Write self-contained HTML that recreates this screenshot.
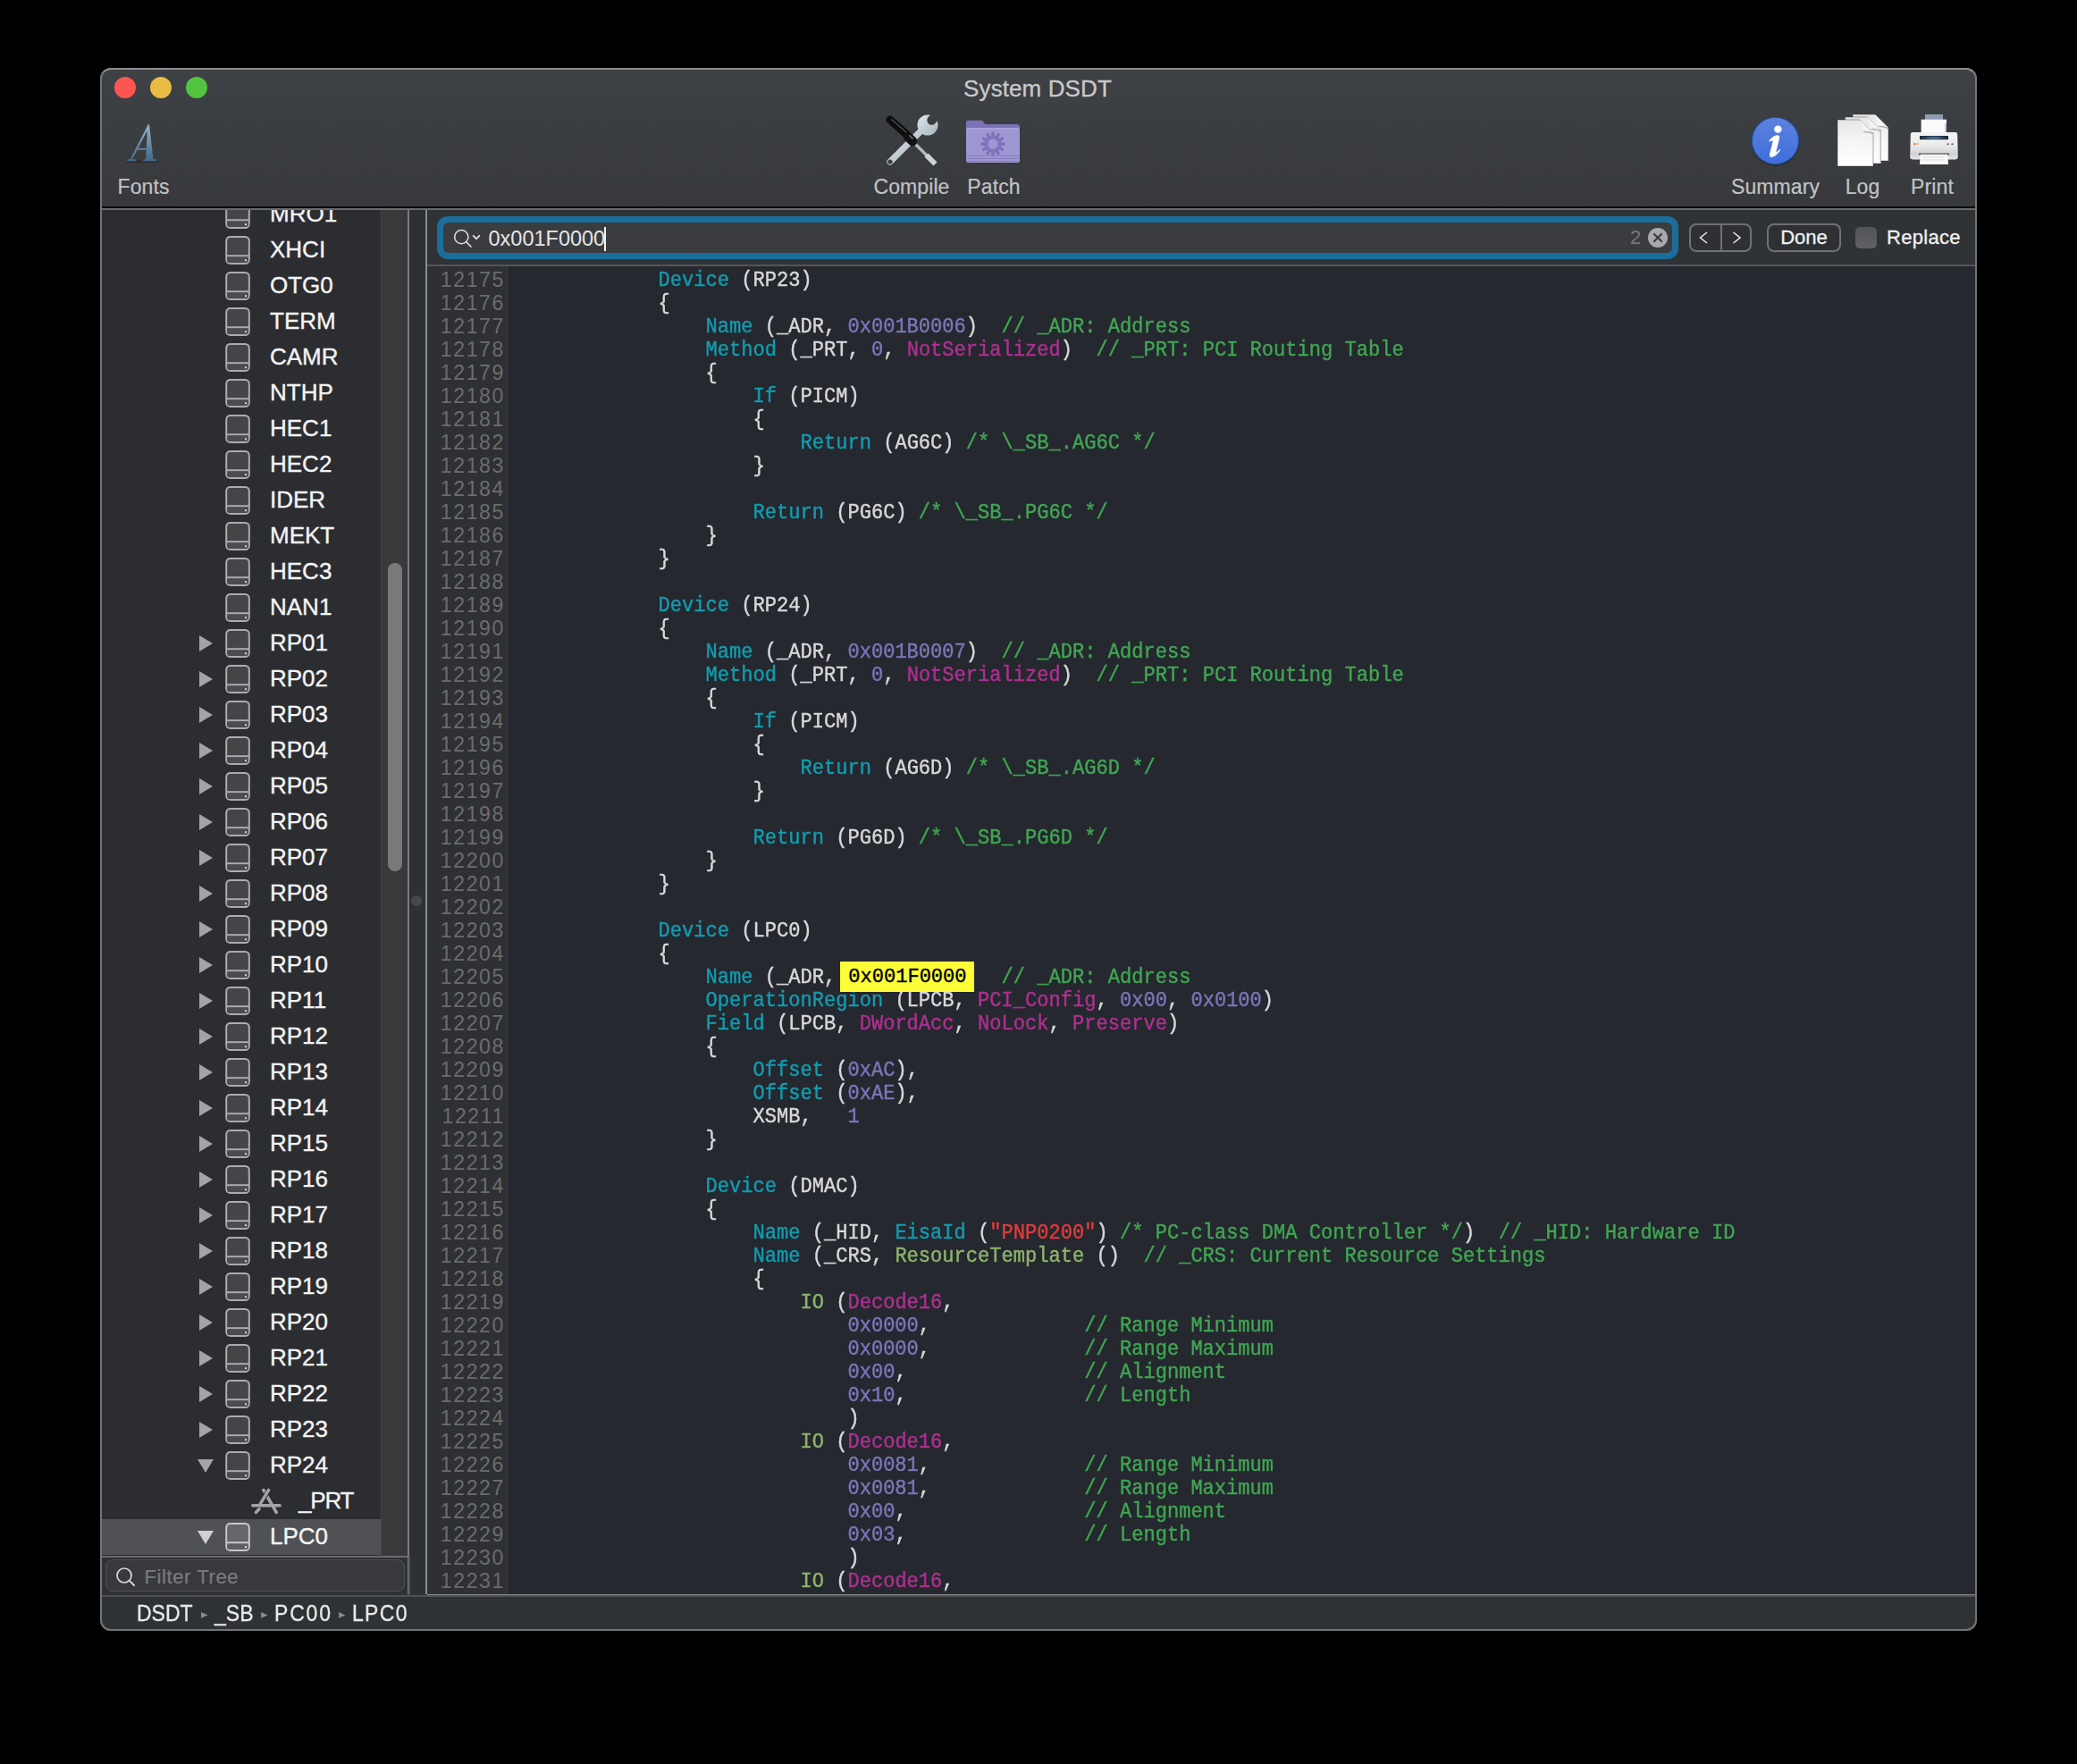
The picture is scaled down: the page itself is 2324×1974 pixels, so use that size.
<!DOCTYPE html>
<html><head><meta charset="utf-8">
<style>
*{box-sizing:border-box;margin:0;padding:0}
html,body{width:2324px;height:1974px;background:#000;overflow:hidden}
body{font-family:"Liberation Sans",sans-serif;position:relative}
.a{position:absolute}
#win{left:112px;top:76px;width:2100px;height:1749px;border-radius:12px;overflow:hidden;background:#2f3235}
#tb{left:0;top:0;width:2100px;height:155px;background:linear-gradient(#3e4145,#37393c)}
#frame{left:112px;top:76px;width:2100px;height:1749px;border-radius:12px;border:2px solid #737475;border-top-color:#8e8e8e;pointer-events:none}
.light{width:24px;height:24px;border-radius:50%;top:10px}
.title{left:-1px;width:2100px;top:8px;text-align:center;font-size:26px;color:#c9c9cb;line-height:30px;letter-spacing:0.1px;-webkit-text-stroke:0.3px #c9c9cb}
.lbl{font-size:23px;color:#c2c3c5;line-height:26px;top:120px;text-align:center;letter-spacing:0.1px;-webkit-text-stroke:0.2px #c2c3c5}
#side{left:2px;top:157px;width:312px;height:1508px;background:#2c2d31;overflow:hidden}
.row{position:absolute;left:0;width:312px;height:40px}
.row.sel{background:#505155}
.tri{position:absolute;left:109px;top:11px;width:0;height:0}
.tri.right{border-left:15px solid #a3a4a8;border-top:9px solid transparent;border-bottom:9px solid transparent}
.tri.down{left:106.8px;top:13px;border-top:15px solid #a3a4a8;border-left:9px solid transparent;border-right:9px solid transparent}
.tri.down.sel{border-top-color:#d0d0d4}
.ico{position:absolute;left:137px;top:3px;width:30px;height:34px}
.ico2{position:absolute;left:167px;top:4px;width:36px;height:34px}
.nm{position:absolute;left:188px;top:-1px;font-size:26px;line-height:40px;color:#f4f4f4;-webkit-text-stroke:0.35px #f4f4f4}
#track{left:314px;top:157px;width:31px;height:1508px;background:#39393b;border-left:1px solid #45464a}
#thumb{left:322px;top:554px;width:16px;height:345px;border-radius:8px;background:#79797b}
#divcol{left:344px;top:157px;width:22px;height:1551px;background:#2e3133;border-left:2px solid #7a7b7d;border-right:2px solid #8a8b8d}
#filter{left:5.5px;top:1669px;width:335.5px;height:36px;border-radius:8px;background:#38393c;border:1.5px solid #505154}
#sbar{left:0;top:1708.5px;width:2100px;height:40.5px;background:#2f3235;border-top:2px solid #4f5153}
.crumb{top:1711px;font-size:23px;line-height:38px;color:#e8e8e8;-webkit-text-stroke:0.3px #e8e8e8;transform:scaleY(1.12);transform-origin:0 28px}
#editor{left:366px;top:157px;width:1734px;height:1553px;background:#25282f;border-right:2px solid #8a8b8d;border-bottom:2px solid #8a8b8d}
#search{left:0;top:0;width:1734px;height:65px;background:#303336;border-bottom:2px solid #535558}
#ring{left:11px;top:9px;width:1389px;height:48px;border-radius:12px;background:#1b6e9b}
#field{left:18px;top:16px;width:1375px;height:34px;border-radius:6px;background:#3a3c3f}
#gut{left:0;top:65px;width:90px;height:1486px;background:#2e3033;border-right:1.5px solid #3f4042}
.code{font-family:"Liberation Mono",monospace;font-size:22.07px;line-height:26px;white-space:pre;color:#d8d8d8}
#lines,#hlbox{-webkit-text-stroke:0.4px currentColor}
#nums{left:0;top:66.5px;width:87px;text-align:right;color:#6b6c6e;font-family:"Liberation Sans",sans-serif;font-size:23px;letter-spacing:1.65px}
#lines{left:99.7px;top:69px}
#lines .l{transform:scaleY(1.08);transform-origin:0 18.9px}
.k{color:#129cb0}.n{color:#7b76b9}.m{color:#ae3090}.c{color:#40a652}.o{color:#8db46b}.s{color:#e33b3b}
#hlbox{left:462px;top:843px;width:150px;height:34px;background:#fdfd38;color:#000}
.btn{border:2px solid #707174;border-radius:8px;background:#2e3033}
</style></head><body>
<div id="win" class="a">
  <div id="tb" class="a">
    <div class="a light" style="left:16px;background:#fd5652"></div>
    <div class="a light" style="left:56px;background:#e9bc43"></div>
    <div class="a light" style="left:96px;background:#52c43f"></div>
    <div class="a title">System DSDT</div>
    <!-- Fonts icon -->
    <svg class="a" style="left:26px;top:60px" width="42" height="48" viewBox="0 0 42 48">
      <defs><linearGradient id="ag" x1="0" y1="0" x2="0" y2="1"><stop offset="0" stop-color="#93b4cc"/><stop offset="1" stop-color="#426887"/></linearGradient></defs>
      <ellipse cx="21" cy="44.8" rx="19" ry="1.6" fill="#2a2c2f" opacity="0.7"/>
      <path d="M27.0 3.5 L29.0 3.5 L33.5 42.2 L25.2 42.2 Z M26.6 5.5 L27.6 8.5 L10.2 42.2 L7.6 42.2 Z M14.8 29.8 L26.2 29.8 L26.2 31.8 L13.8 31.8 Z M3.8 44.2 L4.8 42.2 L13.5 42.2 L14.5 44.2 Z M21.8 44.2 L22.8 42.2 L36.2 42.2 L37.2 44.2 Z" fill="url(#ag)"/>
    </svg>
    <div class="a lbl" style="left:6px;width:85px">Fonts</div>
    <!-- Compile icon -->
    <svg class="a" style="left:873px;top:46px" width="70" height="70" viewBox="0 0 70 70">
      <defs>
        <linearGradient id="wg" x1="0" y1="0" x2="1" y2="1"><stop offset="0" stop-color="#dde8ee"/><stop offset="1" stop-color="#a9b3b9"/></linearGradient>
        <mask id="wm"><rect width="70" height="70" fill="#fff"/><circle cx="57.5" cy="12.5" r="5.2" fill="#000"/><path d="M54 9 L62 1 L69 8 L61 16 Z" fill="#000"/><circle cx="11" cy="59" r="2.6" fill="#000"/></mask>
      </defs>
      <g mask="url(#wm)">
        <line x1="11" y1="59" x2="46" y2="24" stroke="url(#wg)" stroke-width="7.2" stroke-linecap="round"/>
        <circle cx="53" cy="18" r="11.5" fill="url(#wg)"/>
      </g>
      <line x1="38" y1="38" x2="52" y2="52" stroke="#aeb9c0" stroke-width="3.4"/>
      <path d="M50.5 53.5 L53.5 50.5 L62.5 59.5 L59.5 62.5 Z" fill="#c9d3d9" stroke="#c9d3d9" stroke-width="1.6" stroke-linejoin="round"/>
      <line x1="11" y1="12" x2="30" y2="29" stroke="#0d0d0d" stroke-width="9" stroke-linecap="round"/>
      <line x1="13" y1="12" x2="29" y2="26" stroke="#5a5a5a" stroke-width="1.6" stroke-linecap="round" opacity="0.8"/>
      <line x1="31" y1="31" x2="36" y2="36" stroke="#111" stroke-width="10.5" stroke-linecap="round"/>
      <line x1="33" y1="30" x2="36" y2="33" stroke="#5c5c5c" stroke-width="2" stroke-linecap="round"/>
    </svg>
    <div class="a lbl" style="left:858px;width:100px">Compile</div>
    <!-- Patch icon -->
    <svg class="a" style="left:968px;top:58px" width="64" height="52" viewBox="0 0 64 52">
      <path d="M1 3.5 Q1 0.8 3.8 0.8 L17.5 0.8 Q19.3 0.8 20.3 2.2 L22.2 5 L58 5 Q61 5 61 8 L61 45 Q61 48 58 48 L4 48 Q1 48 1 45 Z" fill="#7b72b6"/>
      <path d="M1 12 Q1 9.2 3.8 9.2 L58.2 9.2 Q61 9.2 61 12 L61 45.5 Q61 48 58.5 48 L3.5 48 Q1 48 1 45.5 Z" fill="#9f97d4"/>
      <rect x="1.5" y="9.2" width="59" height="1" fill="#b2abe6"/>
      <rect x="1" y="39.5" width="60" height="1.4" fill="#8d85c4"/>
      <rect x="1" y="42.8" width="60" height="1.2" fill="#8a82c0"/>
      <rect x="1" y="45.8" width="60" height="1.2" fill="#8a82c0"/>
      <g stroke="#7a71bb" stroke-width="3.2" stroke-linecap="round"><line x1="40.50" y1="27.20" x2="43.30" y2="27.20"/><line x1="39.23" y1="31.95" x2="41.65" y2="33.35"/><line x1="35.75" y1="35.43" x2="37.15" y2="37.85"/><line x1="31.00" y1="36.70" x2="31.00" y2="39.50"/><line x1="26.25" y1="35.43" x2="24.85" y2="37.85"/><line x1="22.77" y1="31.95" x2="20.35" y2="33.35"/><line x1="21.50" y1="27.20" x2="18.70" y2="27.20"/><line x1="22.77" y1="22.45" x2="20.35" y2="21.05"/><line x1="26.25" y1="18.97" x2="24.85" y2="16.55"/><line x1="31.00" y1="17.70" x2="31.00" y2="14.90"/><line x1="35.75" y1="18.97" x2="37.15" y2="16.55"/><line x1="39.23" y1="22.45" x2="41.65" y2="21.05"/></g>
      <circle cx="31" cy="27.2" r="7.8" fill="none" stroke="#7d74bd" stroke-width="4.2"/>
    </svg>
    <div class="a lbl" style="left:950px;width:100px">Patch</div>
    <!-- Summary -->
    <div class="a" style="left:1848px;top:55px;width:53px;height:53px;border-radius:50%;background:linear-gradient(#5b82df,#3f6fdb);border:1px solid #2356c8;box-shadow:0 1px 2px rgba(0,0,0,0.4)"></div>
    <svg class="a" style="left:1838px;top:44px" width="70" height="70" viewBox="0 0 70 70"><circle cx="39.4" cy="24.6" r="4.2" fill="#fff"/><path d="M29.2 37.6 C31.5 35 34.5 31.5 38.5 31.2 C40.8 31 41.6 33 41 35 L37.2 50.6 C38.8 49.5 40.5 48 41.6 46.8 L42.2 47.8 C39.5 52 35.5 56 32.2 55.9 C29.8 55.8 29.6 54 30.2 52 L33.8 37.5 C32.6 37.3 30.8 38.2 29.8 38.6 Z" fill="#fff"/></svg>
    <div class="a lbl" style="left:1812px;width:125px">Summary</div>
    <!-- Log -->
    <svg class="a" style="left:1938px;top:44px" width="70" height="70" viewBox="0 0 70 70">
      <defs><linearGradient id="lg" x1="0" y1="0" x2="0" y2="1"><stop offset="0" stop-color="#e6e6e6"/><stop offset="0.5" stop-color="#f6f6f6"/><stop offset="1" stop-color="#ffffff"/></linearGradient></defs>
      <path d="M23.0 8.0 L48.0 8.0 L63.0 23.0 L63.0 60.0 L23.0 60.0 Z" fill="url(#lg)" stroke="#2a2b2d" stroke-width="0.7" stroke-opacity="0.6"/><path d="M48.0 8.0 Q50.5 17.0 52.2 21.2 Q59.0 20.8 63.0 23.0 Z" fill="#f4f4f4"/><path d="M52.2 21.4 Q59.0 21.2 63.0 24.0" fill="none" stroke="#9a9a9a" stroke-width="1.1" opacity="0.8"/><rect x="61.8" y="24.0" width="1.2" height="36.0" fill="#d0d0d0"/>
      <path d="M14.5 11.0 L39.5 11.0 L54.5 26.0 L54.5 63.0 L14.5 63.0 Z" fill="url(#lg)" stroke="#2a2b2d" stroke-width="0.7" stroke-opacity="0.6"/><path d="M39.5 11.0 Q42.0 20.0 43.7 24.2 Q50.5 23.8 54.5 26.0 Z" fill="#f4f4f4"/><path d="M43.7 24.4 Q50.5 24.2 54.5 27.0" fill="none" stroke="#9a9a9a" stroke-width="1.1" opacity="0.8"/><rect x="53.3" y="27.0" width="1.2" height="36.0" fill="#d0d0d0"/>
      <path d="M6.0 14.0 L31.0 14.0 L46.0 29.0 L46.0 66.0 L6.0 66.0 Z" fill="url(#lg)" stroke="#2a2b2d" stroke-width="0.7" stroke-opacity="0.6"/><path d="M31.0 14.0 Q33.5 23.0 35.2 27.2 Q42.0 26.8 46.0 29.0 Z" fill="#f4f4f4"/><path d="M35.2 27.4 Q42.0 27.2 46.0 30.0" fill="none" stroke="#9a9a9a" stroke-width="1.1" opacity="0.8"/><rect x="44.8" y="30.0" width="1.2" height="36.0" fill="#d0d0d0"/>
    </svg>
    <div class="a lbl" style="left:1937px;width:70px">Log</div>
    <!-- Print -->
    <svg class="a" style="left:2022px;top:48px" width="60" height="64" viewBox="0 0 60 64">
      <defs>
        <linearGradient id="pb" x1="0" y1="0" x2="0" y2="1"><stop offset="0" stop-color="#f4f4f4"/><stop offset="0.45" stop-color="#ececec"/><stop offset="0.8" stop-color="#d2d2d4"/><stop offset="1" stop-color="#e6e6e6"/></linearGradient>
        <radialGradient id="ps" cx="0.5" cy="0.5" r="0.5"><stop offset="0" stop-color="#5f82aa"/><stop offset="1" stop-color="#1c2a3e"/></radialGradient>
      </defs>
      <rect x="20" y="4" width="20" height="6" fill="#8f9bb3"/>
      <rect x="15.6" y="9.7" width="28.4" height="19" fill="#fbfbfb"/>
      <rect x="42.5" y="14" width="1.5" height="14" fill="#a9b8cc"/>
      <path d="M6 24 L54 24 Q56 24 56.2 27 L56.8 51 Q56.8 54.5 53.5 54.5 L6.5 54.5 Q3.2 54.5 3.2 51 L3.8 27 Q4 24 6 24 Z" fill="url(#pb)"/>
      <rect x="14" y="28" width="32" height="4.5" fill="url(#ps)"/>
      <rect x="13" y="32.5" width="34" height="1.2" fill="#f8f8f8"/>
      <rect x="7.5" y="36.3" width="1.8" height="1.6" fill="#e0401c"/><rect x="10.6" y="36.3" width="1.8" height="1.6" fill="#f0a020"/>
      <ellipse cx="45.5" cy="37.2" rx="1.4" ry="1" fill="#6a6a6a"/><ellipse cx="50.5" cy="37.2" rx="1.4" ry="1" fill="#6a6a6a"/>
      <rect x="13" y="47.5" width="34" height="2" fill="#555"/>
      <path d="M14.8 48.8 L45.2 48.8 L46 60 L14 60 Z" fill="#fafafa"/>
      <rect x="17" y="51.5" width="25" height="0.8" fill="#cfcfcf"/><rect x="17" y="54.5" width="25" height="0.8" fill="#cfcfcf"/>
    </svg>
    <div class="a lbl" style="left:2000px;width:100px">Print</div>
  </div>

  <div id="side" class="a">
<div class="row" style="top:-13px"><div class="ico"><svg class="drv" width="30" height="34" viewBox="0 0 30 34"><rect x="2.2" y="2" width="25.6" height="30" rx="4.5" fill="#444547" stroke="#abacb0" stroke-width="2"/><line x1="3" y1="23.2" x2="27" y2="23.2" stroke="#abacb0" stroke-width="2"/><rect x="3.2" y="25" width="23.6" height="5.8" rx="2" fill="#4b4c4f"/><rect x="23" y="27.2" width="2" height="2" fill="#d6d6da"/></svg></div><div class="nm">MRO1</div></div>
<div class="row" style="top:27px"><div class="ico"><svg class="drv" width="30" height="34" viewBox="0 0 30 34"><rect x="2.2" y="2" width="25.6" height="30" rx="4.5" fill="#444547" stroke="#abacb0" stroke-width="2"/><line x1="3" y1="23.2" x2="27" y2="23.2" stroke="#abacb0" stroke-width="2"/><rect x="3.2" y="25" width="23.6" height="5.8" rx="2" fill="#4b4c4f"/><rect x="23" y="27.2" width="2" height="2" fill="#d6d6da"/></svg></div><div class="nm">XHCI</div></div>
<div class="row" style="top:67px"><div class="ico"><svg class="drv" width="30" height="34" viewBox="0 0 30 34"><rect x="2.2" y="2" width="25.6" height="30" rx="4.5" fill="#444547" stroke="#abacb0" stroke-width="2"/><line x1="3" y1="23.2" x2="27" y2="23.2" stroke="#abacb0" stroke-width="2"/><rect x="3.2" y="25" width="23.6" height="5.8" rx="2" fill="#4b4c4f"/><rect x="23" y="27.2" width="2" height="2" fill="#d6d6da"/></svg></div><div class="nm">OTG0</div></div>
<div class="row" style="top:107px"><div class="ico"><svg class="drv" width="30" height="34" viewBox="0 0 30 34"><rect x="2.2" y="2" width="25.6" height="30" rx="4.5" fill="#444547" stroke="#abacb0" stroke-width="2"/><line x1="3" y1="23.2" x2="27" y2="23.2" stroke="#abacb0" stroke-width="2"/><rect x="3.2" y="25" width="23.6" height="5.8" rx="2" fill="#4b4c4f"/><rect x="23" y="27.2" width="2" height="2" fill="#d6d6da"/></svg></div><div class="nm">TERM</div></div>
<div class="row" style="top:147px"><div class="ico"><svg class="drv" width="30" height="34" viewBox="0 0 30 34"><rect x="2.2" y="2" width="25.6" height="30" rx="4.5" fill="#444547" stroke="#abacb0" stroke-width="2"/><line x1="3" y1="23.2" x2="27" y2="23.2" stroke="#abacb0" stroke-width="2"/><rect x="3.2" y="25" width="23.6" height="5.8" rx="2" fill="#4b4c4f"/><rect x="23" y="27.2" width="2" height="2" fill="#d6d6da"/></svg></div><div class="nm">CAMR</div></div>
<div class="row" style="top:187px"><div class="ico"><svg class="drv" width="30" height="34" viewBox="0 0 30 34"><rect x="2.2" y="2" width="25.6" height="30" rx="4.5" fill="#444547" stroke="#abacb0" stroke-width="2"/><line x1="3" y1="23.2" x2="27" y2="23.2" stroke="#abacb0" stroke-width="2"/><rect x="3.2" y="25" width="23.6" height="5.8" rx="2" fill="#4b4c4f"/><rect x="23" y="27.2" width="2" height="2" fill="#d6d6da"/></svg></div><div class="nm">NTHP</div></div>
<div class="row" style="top:227px"><div class="ico"><svg class="drv" width="30" height="34" viewBox="0 0 30 34"><rect x="2.2" y="2" width="25.6" height="30" rx="4.5" fill="#444547" stroke="#abacb0" stroke-width="2"/><line x1="3" y1="23.2" x2="27" y2="23.2" stroke="#abacb0" stroke-width="2"/><rect x="3.2" y="25" width="23.6" height="5.8" rx="2" fill="#4b4c4f"/><rect x="23" y="27.2" width="2" height="2" fill="#d6d6da"/></svg></div><div class="nm">HEC1</div></div>
<div class="row" style="top:267px"><div class="ico"><svg class="drv" width="30" height="34" viewBox="0 0 30 34"><rect x="2.2" y="2" width="25.6" height="30" rx="4.5" fill="#444547" stroke="#abacb0" stroke-width="2"/><line x1="3" y1="23.2" x2="27" y2="23.2" stroke="#abacb0" stroke-width="2"/><rect x="3.2" y="25" width="23.6" height="5.8" rx="2" fill="#4b4c4f"/><rect x="23" y="27.2" width="2" height="2" fill="#d6d6da"/></svg></div><div class="nm">HEC2</div></div>
<div class="row" style="top:307px"><div class="ico"><svg class="drv" width="30" height="34" viewBox="0 0 30 34"><rect x="2.2" y="2" width="25.6" height="30" rx="4.5" fill="#444547" stroke="#abacb0" stroke-width="2"/><line x1="3" y1="23.2" x2="27" y2="23.2" stroke="#abacb0" stroke-width="2"/><rect x="3.2" y="25" width="23.6" height="5.8" rx="2" fill="#4b4c4f"/><rect x="23" y="27.2" width="2" height="2" fill="#d6d6da"/></svg></div><div class="nm">IDER</div></div>
<div class="row" style="top:347px"><div class="ico"><svg class="drv" width="30" height="34" viewBox="0 0 30 34"><rect x="2.2" y="2" width="25.6" height="30" rx="4.5" fill="#444547" stroke="#abacb0" stroke-width="2"/><line x1="3" y1="23.2" x2="27" y2="23.2" stroke="#abacb0" stroke-width="2"/><rect x="3.2" y="25" width="23.6" height="5.8" rx="2" fill="#4b4c4f"/><rect x="23" y="27.2" width="2" height="2" fill="#d6d6da"/></svg></div><div class="nm">MEKT</div></div>
<div class="row" style="top:387px"><div class="ico"><svg class="drv" width="30" height="34" viewBox="0 0 30 34"><rect x="2.2" y="2" width="25.6" height="30" rx="4.5" fill="#444547" stroke="#abacb0" stroke-width="2"/><line x1="3" y1="23.2" x2="27" y2="23.2" stroke="#abacb0" stroke-width="2"/><rect x="3.2" y="25" width="23.6" height="5.8" rx="2" fill="#4b4c4f"/><rect x="23" y="27.2" width="2" height="2" fill="#d6d6da"/></svg></div><div class="nm">HEC3</div></div>
<div class="row" style="top:427px"><div class="ico"><svg class="drv" width="30" height="34" viewBox="0 0 30 34"><rect x="2.2" y="2" width="25.6" height="30" rx="4.5" fill="#444547" stroke="#abacb0" stroke-width="2"/><line x1="3" y1="23.2" x2="27" y2="23.2" stroke="#abacb0" stroke-width="2"/><rect x="3.2" y="25" width="23.6" height="5.8" rx="2" fill="#4b4c4f"/><rect x="23" y="27.2" width="2" height="2" fill="#d6d6da"/></svg></div><div class="nm">NAN1</div></div>
<div class="row" style="top:467px"><div class="tri right"></div><div class="ico"><svg class="drv" width="30" height="34" viewBox="0 0 30 34"><rect x="2.2" y="2" width="25.6" height="30" rx="4.5" fill="#444547" stroke="#abacb0" stroke-width="2"/><line x1="3" y1="23.2" x2="27" y2="23.2" stroke="#abacb0" stroke-width="2"/><rect x="3.2" y="25" width="23.6" height="5.8" rx="2" fill="#4b4c4f"/><rect x="23" y="27.2" width="2" height="2" fill="#d6d6da"/></svg></div><div class="nm">RP01</div></div>
<div class="row" style="top:507px"><div class="tri right"></div><div class="ico"><svg class="drv" width="30" height="34" viewBox="0 0 30 34"><rect x="2.2" y="2" width="25.6" height="30" rx="4.5" fill="#444547" stroke="#abacb0" stroke-width="2"/><line x1="3" y1="23.2" x2="27" y2="23.2" stroke="#abacb0" stroke-width="2"/><rect x="3.2" y="25" width="23.6" height="5.8" rx="2" fill="#4b4c4f"/><rect x="23" y="27.2" width="2" height="2" fill="#d6d6da"/></svg></div><div class="nm">RP02</div></div>
<div class="row" style="top:547px"><div class="tri right"></div><div class="ico"><svg class="drv" width="30" height="34" viewBox="0 0 30 34"><rect x="2.2" y="2" width="25.6" height="30" rx="4.5" fill="#444547" stroke="#abacb0" stroke-width="2"/><line x1="3" y1="23.2" x2="27" y2="23.2" stroke="#abacb0" stroke-width="2"/><rect x="3.2" y="25" width="23.6" height="5.8" rx="2" fill="#4b4c4f"/><rect x="23" y="27.2" width="2" height="2" fill="#d6d6da"/></svg></div><div class="nm">RP03</div></div>
<div class="row" style="top:587px"><div class="tri right"></div><div class="ico"><svg class="drv" width="30" height="34" viewBox="0 0 30 34"><rect x="2.2" y="2" width="25.6" height="30" rx="4.5" fill="#444547" stroke="#abacb0" stroke-width="2"/><line x1="3" y1="23.2" x2="27" y2="23.2" stroke="#abacb0" stroke-width="2"/><rect x="3.2" y="25" width="23.6" height="5.8" rx="2" fill="#4b4c4f"/><rect x="23" y="27.2" width="2" height="2" fill="#d6d6da"/></svg></div><div class="nm">RP04</div></div>
<div class="row" style="top:627px"><div class="tri right"></div><div class="ico"><svg class="drv" width="30" height="34" viewBox="0 0 30 34"><rect x="2.2" y="2" width="25.6" height="30" rx="4.5" fill="#444547" stroke="#abacb0" stroke-width="2"/><line x1="3" y1="23.2" x2="27" y2="23.2" stroke="#abacb0" stroke-width="2"/><rect x="3.2" y="25" width="23.6" height="5.8" rx="2" fill="#4b4c4f"/><rect x="23" y="27.2" width="2" height="2" fill="#d6d6da"/></svg></div><div class="nm">RP05</div></div>
<div class="row" style="top:667px"><div class="tri right"></div><div class="ico"><svg class="drv" width="30" height="34" viewBox="0 0 30 34"><rect x="2.2" y="2" width="25.6" height="30" rx="4.5" fill="#444547" stroke="#abacb0" stroke-width="2"/><line x1="3" y1="23.2" x2="27" y2="23.2" stroke="#abacb0" stroke-width="2"/><rect x="3.2" y="25" width="23.6" height="5.8" rx="2" fill="#4b4c4f"/><rect x="23" y="27.2" width="2" height="2" fill="#d6d6da"/></svg></div><div class="nm">RP06</div></div>
<div class="row" style="top:707px"><div class="tri right"></div><div class="ico"><svg class="drv" width="30" height="34" viewBox="0 0 30 34"><rect x="2.2" y="2" width="25.6" height="30" rx="4.5" fill="#444547" stroke="#abacb0" stroke-width="2"/><line x1="3" y1="23.2" x2="27" y2="23.2" stroke="#abacb0" stroke-width="2"/><rect x="3.2" y="25" width="23.6" height="5.8" rx="2" fill="#4b4c4f"/><rect x="23" y="27.2" width="2" height="2" fill="#d6d6da"/></svg></div><div class="nm">RP07</div></div>
<div class="row" style="top:747px"><div class="tri right"></div><div class="ico"><svg class="drv" width="30" height="34" viewBox="0 0 30 34"><rect x="2.2" y="2" width="25.6" height="30" rx="4.5" fill="#444547" stroke="#abacb0" stroke-width="2"/><line x1="3" y1="23.2" x2="27" y2="23.2" stroke="#abacb0" stroke-width="2"/><rect x="3.2" y="25" width="23.6" height="5.8" rx="2" fill="#4b4c4f"/><rect x="23" y="27.2" width="2" height="2" fill="#d6d6da"/></svg></div><div class="nm">RP08</div></div>
<div class="row" style="top:787px"><div class="tri right"></div><div class="ico"><svg class="drv" width="30" height="34" viewBox="0 0 30 34"><rect x="2.2" y="2" width="25.6" height="30" rx="4.5" fill="#444547" stroke="#abacb0" stroke-width="2"/><line x1="3" y1="23.2" x2="27" y2="23.2" stroke="#abacb0" stroke-width="2"/><rect x="3.2" y="25" width="23.6" height="5.8" rx="2" fill="#4b4c4f"/><rect x="23" y="27.2" width="2" height="2" fill="#d6d6da"/></svg></div><div class="nm">RP09</div></div>
<div class="row" style="top:827px"><div class="tri right"></div><div class="ico"><svg class="drv" width="30" height="34" viewBox="0 0 30 34"><rect x="2.2" y="2" width="25.6" height="30" rx="4.5" fill="#444547" stroke="#abacb0" stroke-width="2"/><line x1="3" y1="23.2" x2="27" y2="23.2" stroke="#abacb0" stroke-width="2"/><rect x="3.2" y="25" width="23.6" height="5.8" rx="2" fill="#4b4c4f"/><rect x="23" y="27.2" width="2" height="2" fill="#d6d6da"/></svg></div><div class="nm">RP10</div></div>
<div class="row" style="top:867px"><div class="tri right"></div><div class="ico"><svg class="drv" width="30" height="34" viewBox="0 0 30 34"><rect x="2.2" y="2" width="25.6" height="30" rx="4.5" fill="#444547" stroke="#abacb0" stroke-width="2"/><line x1="3" y1="23.2" x2="27" y2="23.2" stroke="#abacb0" stroke-width="2"/><rect x="3.2" y="25" width="23.6" height="5.8" rx="2" fill="#4b4c4f"/><rect x="23" y="27.2" width="2" height="2" fill="#d6d6da"/></svg></div><div class="nm">RP11</div></div>
<div class="row" style="top:907px"><div class="tri right"></div><div class="ico"><svg class="drv" width="30" height="34" viewBox="0 0 30 34"><rect x="2.2" y="2" width="25.6" height="30" rx="4.5" fill="#444547" stroke="#abacb0" stroke-width="2"/><line x1="3" y1="23.2" x2="27" y2="23.2" stroke="#abacb0" stroke-width="2"/><rect x="3.2" y="25" width="23.6" height="5.8" rx="2" fill="#4b4c4f"/><rect x="23" y="27.2" width="2" height="2" fill="#d6d6da"/></svg></div><div class="nm">RP12</div></div>
<div class="row" style="top:947px"><div class="tri right"></div><div class="ico"><svg class="drv" width="30" height="34" viewBox="0 0 30 34"><rect x="2.2" y="2" width="25.6" height="30" rx="4.5" fill="#444547" stroke="#abacb0" stroke-width="2"/><line x1="3" y1="23.2" x2="27" y2="23.2" stroke="#abacb0" stroke-width="2"/><rect x="3.2" y="25" width="23.6" height="5.8" rx="2" fill="#4b4c4f"/><rect x="23" y="27.2" width="2" height="2" fill="#d6d6da"/></svg></div><div class="nm">RP13</div></div>
<div class="row" style="top:987px"><div class="tri right"></div><div class="ico"><svg class="drv" width="30" height="34" viewBox="0 0 30 34"><rect x="2.2" y="2" width="25.6" height="30" rx="4.5" fill="#444547" stroke="#abacb0" stroke-width="2"/><line x1="3" y1="23.2" x2="27" y2="23.2" stroke="#abacb0" stroke-width="2"/><rect x="3.2" y="25" width="23.6" height="5.8" rx="2" fill="#4b4c4f"/><rect x="23" y="27.2" width="2" height="2" fill="#d6d6da"/></svg></div><div class="nm">RP14</div></div>
<div class="row" style="top:1027px"><div class="tri right"></div><div class="ico"><svg class="drv" width="30" height="34" viewBox="0 0 30 34"><rect x="2.2" y="2" width="25.6" height="30" rx="4.5" fill="#444547" stroke="#abacb0" stroke-width="2"/><line x1="3" y1="23.2" x2="27" y2="23.2" stroke="#abacb0" stroke-width="2"/><rect x="3.2" y="25" width="23.6" height="5.8" rx="2" fill="#4b4c4f"/><rect x="23" y="27.2" width="2" height="2" fill="#d6d6da"/></svg></div><div class="nm">RP15</div></div>
<div class="row" style="top:1067px"><div class="tri right"></div><div class="ico"><svg class="drv" width="30" height="34" viewBox="0 0 30 34"><rect x="2.2" y="2" width="25.6" height="30" rx="4.5" fill="#444547" stroke="#abacb0" stroke-width="2"/><line x1="3" y1="23.2" x2="27" y2="23.2" stroke="#abacb0" stroke-width="2"/><rect x="3.2" y="25" width="23.6" height="5.8" rx="2" fill="#4b4c4f"/><rect x="23" y="27.2" width="2" height="2" fill="#d6d6da"/></svg></div><div class="nm">RP16</div></div>
<div class="row" style="top:1107px"><div class="tri right"></div><div class="ico"><svg class="drv" width="30" height="34" viewBox="0 0 30 34"><rect x="2.2" y="2" width="25.6" height="30" rx="4.5" fill="#444547" stroke="#abacb0" stroke-width="2"/><line x1="3" y1="23.2" x2="27" y2="23.2" stroke="#abacb0" stroke-width="2"/><rect x="3.2" y="25" width="23.6" height="5.8" rx="2" fill="#4b4c4f"/><rect x="23" y="27.2" width="2" height="2" fill="#d6d6da"/></svg></div><div class="nm">RP17</div></div>
<div class="row" style="top:1147px"><div class="tri right"></div><div class="ico"><svg class="drv" width="30" height="34" viewBox="0 0 30 34"><rect x="2.2" y="2" width="25.6" height="30" rx="4.5" fill="#444547" stroke="#abacb0" stroke-width="2"/><line x1="3" y1="23.2" x2="27" y2="23.2" stroke="#abacb0" stroke-width="2"/><rect x="3.2" y="25" width="23.6" height="5.8" rx="2" fill="#4b4c4f"/><rect x="23" y="27.2" width="2" height="2" fill="#d6d6da"/></svg></div><div class="nm">RP18</div></div>
<div class="row" style="top:1187px"><div class="tri right"></div><div class="ico"><svg class="drv" width="30" height="34" viewBox="0 0 30 34"><rect x="2.2" y="2" width="25.6" height="30" rx="4.5" fill="#444547" stroke="#abacb0" stroke-width="2"/><line x1="3" y1="23.2" x2="27" y2="23.2" stroke="#abacb0" stroke-width="2"/><rect x="3.2" y="25" width="23.6" height="5.8" rx="2" fill="#4b4c4f"/><rect x="23" y="27.2" width="2" height="2" fill="#d6d6da"/></svg></div><div class="nm">RP19</div></div>
<div class="row" style="top:1227px"><div class="tri right"></div><div class="ico"><svg class="drv" width="30" height="34" viewBox="0 0 30 34"><rect x="2.2" y="2" width="25.6" height="30" rx="4.5" fill="#444547" stroke="#abacb0" stroke-width="2"/><line x1="3" y1="23.2" x2="27" y2="23.2" stroke="#abacb0" stroke-width="2"/><rect x="3.2" y="25" width="23.6" height="5.8" rx="2" fill="#4b4c4f"/><rect x="23" y="27.2" width="2" height="2" fill="#d6d6da"/></svg></div><div class="nm">RP20</div></div>
<div class="row" style="top:1267px"><div class="tri right"></div><div class="ico"><svg class="drv" width="30" height="34" viewBox="0 0 30 34"><rect x="2.2" y="2" width="25.6" height="30" rx="4.5" fill="#444547" stroke="#abacb0" stroke-width="2"/><line x1="3" y1="23.2" x2="27" y2="23.2" stroke="#abacb0" stroke-width="2"/><rect x="3.2" y="25" width="23.6" height="5.8" rx="2" fill="#4b4c4f"/><rect x="23" y="27.2" width="2" height="2" fill="#d6d6da"/></svg></div><div class="nm">RP21</div></div>
<div class="row" style="top:1307px"><div class="tri right"></div><div class="ico"><svg class="drv" width="30" height="34" viewBox="0 0 30 34"><rect x="2.2" y="2" width="25.6" height="30" rx="4.5" fill="#444547" stroke="#abacb0" stroke-width="2"/><line x1="3" y1="23.2" x2="27" y2="23.2" stroke="#abacb0" stroke-width="2"/><rect x="3.2" y="25" width="23.6" height="5.8" rx="2" fill="#4b4c4f"/><rect x="23" y="27.2" width="2" height="2" fill="#d6d6da"/></svg></div><div class="nm">RP22</div></div>
<div class="row" style="top:1347px"><div class="tri right"></div><div class="ico"><svg class="drv" width="30" height="34" viewBox="0 0 30 34"><rect x="2.2" y="2" width="25.6" height="30" rx="4.5" fill="#444547" stroke="#abacb0" stroke-width="2"/><line x1="3" y1="23.2" x2="27" y2="23.2" stroke="#abacb0" stroke-width="2"/><rect x="3.2" y="25" width="23.6" height="5.8" rx="2" fill="#4b4c4f"/><rect x="23" y="27.2" width="2" height="2" fill="#d6d6da"/></svg></div><div class="nm">RP23</div></div>
<div class="row" style="top:1387px"><div class="tri down"></div><div class="ico"><svg class="drv" width="30" height="34" viewBox="0 0 30 34"><rect x="2.2" y="2" width="25.6" height="30" rx="4.5" fill="#444547" stroke="#abacb0" stroke-width="2"/><line x1="3" y1="23.2" x2="27" y2="23.2" stroke="#abacb0" stroke-width="2"/><rect x="3.2" y="25" width="23.6" height="5.8" rx="2" fill="#4b4c4f"/><rect x="23" y="27.2" width="2" height="2" fill="#d6d6da"/></svg></div><div class="nm">RP24</div></div>
<div class="row" style="top:1427px"><div class="ico2"><svg width="36" height="34" viewBox="0 0 36 34"><g stroke-linecap="round" fill="none"><line x1="13.8" y1="3.4" x2="28.3" y2="28.5" stroke="#a3a4a8" stroke-width="3.5"/><line x1="17.2" y1="7.4" x2="10.5" y2="18.6" stroke="#2c2d31" stroke-width="5.2"/><line x1="19.6" y1="3.4" x2="9.5" y2="20.2" stroke="#a3a4a8" stroke-width="3.5"/><line x1="1.8" y1="20.8" x2="32.1" y2="20.8" stroke="#a3a4a8" stroke-width="3.5"/><line x1="9" y1="24.6" x2="5.4" y2="28.5" stroke="#a3a4a8" stroke-width="3.5"/></g></svg></div><div class="nm" style="left:220px;letter-spacing:-1.2px">_PRT</div></div>
<div class="row sel" style="top:1467px"><div class="tri down sel"></div><div class="ico"><svg class="drv" width="30" height="34" viewBox="0 0 30 34"><rect x="2.2" y="2" width="25.6" height="30" rx="4.5" fill="#656669" stroke="#c8c8cc" stroke-width="2"/><line x1="3" y1="23.2" x2="27" y2="23.2" stroke="#c8c8cc" stroke-width="2"/><rect x="3.2" y="25" width="23.6" height="5.8" rx="2" fill="#5e5f62"/><rect x="23" y="27.2" width="2" height="2" fill="#e8e8ec"/></svg></div><div class="nm">LPC0</div></div>
  </div>
  <div id="track" class="a"></div>
  <div id="thumb" class="a"></div>
  <div class="a" style="left:0;top:1664.5px;width:345px;height:44.5px;background:#2e3033;border-top:2px solid #6b6c6e"></div>
  <div id="filter" class="a">
    <svg class="a" style="left:10px;top:7px" width="24" height="24" viewBox="0 0 24 24"><circle cx="10" cy="10" r="8" fill="none" stroke="#dadadc" stroke-width="1.7"/><line x1="15.8" y1="15.8" x2="21" y2="21" stroke="#dadadc" stroke-width="1.9" stroke-linecap="round"/></svg>
    <div class="a" style="left:43px;top:2px;font-size:22px;line-height:34px;color:#7a7b7e;letter-spacing:0.6px;-webkit-text-stroke:0.25px #7a7b7e">Filter Tree</div>
  </div>
  <div class="a" style="left:344.5px;top:1666px;width:2px;height:43px;background:#4f5153;z-index:1"></div>
  <div id="divcol" class="a"><div class="a" style="left:2px;top:769px;width:12px;height:12px;border-radius:50%;background:#46494b"></div></div>

  <div id="editor" class="a">
    <div id="search" class="a">
      <div id="ring" class="a"></div>
      <div id="field" class="a">
        <svg class="a" style="left:11px;top:7px" width="34" height="24" viewBox="0 0 34 24"><circle cx="9.3" cy="9.2" r="7.6" fill="none" stroke="#dcdcde" stroke-width="1.5"/><line x1="14.6" y1="14.6" x2="20" y2="20" stroke="#dcdcde" stroke-width="1.7" stroke-linecap="round"/><path d="M22.6 7.8 L26 11.2 L29.4 7.8" fill="none" stroke="#dcdcde" stroke-width="1.8" stroke-linecap="round"/></svg>
        <div class="a" style="left:50.5px;top:1px;font-size:23.5px;line-height:34px;color:#e6e6e6;letter-spacing:0px">0x001F0000</div>
        <div class="a" style="left:180px;top:5px;width:2px;height:27px;background:#f0f0f0"></div>
        <div class="a" style="left:1328px;top:0;font-size:22px;line-height:34px;color:#77787b">2</div>
        <div class="a" style="left:1348px;top:6px;width:22px;height:22px;border-radius:50%;background:#a9a9ab"></div>
        <svg class="a" style="left:1348px;top:6px" width="22" height="22" viewBox="0 0 22 22"><path d="M7 7 L15 15 M15 7 L7 15" stroke="#3a3c3f" stroke-width="2.2" stroke-linecap="round"/></svg>
      </div>
      <div class="a btn" style="left:1412px;top:17px;width:70px;height:32px"></div>
      <div class="a" style="left:1446.5px;top:18px;width:2px;height:30px;background:#707174"></div>
      <svg class="a" style="left:1412px;top:17px" width="70" height="32" viewBox="0 0 70 32"><path d="M20 10 L12.5 16 L20 22 M49.5 10 L57 16 L49.5 22" fill="none" stroke="#e6e6e8" stroke-width="1.6"/></svg>
      <div class="a btn" style="left:1499px;top:17px;width:83px;height:32px;font-size:22px;line-height:28px;color:#f0f0f0;text-align:center;-webkit-text-stroke:0.3px #f0f0f0">Done</div>
      <div class="a" style="left:1598px;top:21px;width:24px;height:24px;border-radius:5px;background:linear-gradient(#525457,#5f6164)"></div>
      <div class="a" style="left:1633px;top:16px;font-size:22px;line-height:34px;color:#f0f0f0;letter-spacing:0.3px;-webkit-text-stroke:0.3px #f0f0f0">Replace</div>
    </div>
    <div id="gut" class="a"></div>
    <div id="nums" class="a code"><div class="l">12175</div><div class="l">12176</div><div class="l">12177</div><div class="l">12178</div><div class="l">12179</div><div class="l">12180</div><div class="l">12181</div><div class="l">12182</div><div class="l">12183</div><div class="l">12184</div><div class="l">12185</div><div class="l">12186</div><div class="l">12187</div><div class="l">12188</div><div class="l">12189</div><div class="l">12190</div><div class="l">12191</div><div class="l">12192</div><div class="l">12193</div><div class="l">12194</div><div class="l">12195</div><div class="l">12196</div><div class="l">12197</div><div class="l">12198</div><div class="l">12199</div><div class="l">12200</div><div class="l">12201</div><div class="l">12202</div><div class="l">12203</div><div class="l">12204</div><div class="l">12205</div><div class="l">12206</div><div class="l">12207</div><div class="l">12208</div><div class="l">12209</div><div class="l">12210</div><div class="l">12211</div><div class="l">12212</div><div class="l">12213</div><div class="l">12214</div><div class="l">12215</div><div class="l">12216</div><div class="l">12217</div><div class="l">12218</div><div class="l">12219</div><div class="l">12220</div><div class="l">12221</div><div class="l">12222</div><div class="l">12223</div><div class="l">12224</div><div class="l">12225</div><div class="l">12226</div><div class="l">12227</div><div class="l">12228</div><div class="l">12229</div><div class="l">12230</div><div class="l">12231</div></div>
    <div id="lines" class="a code"><div class="l">            <span class="k">Device</span> (RP23)</div><div class="l">            {</div><div class="l">                <span class="k">Name</span> (_ADR, <span class="n">0x001B0006</span>)  <span class="c">// _ADR: Address</span></div><div class="l">                <span class="k">Method</span> (_PRT, <span class="n">0</span>, <span class="m">NotSerialized</span>)  <span class="c">// _PRT: PCI Routing Table</span></div><div class="l">                {</div><div class="l">                    <span class="k">If</span> (PICM)</div><div class="l">                    {</div><div class="l">                        <span class="k">Return</span> (AG6C) <span class="c">/* \_SB_.AG6C */</span></div><div class="l">                    }</div><div class="l">&#8203;</div><div class="l">                    <span class="k">Return</span> (PG6C) <span class="c">/* \_SB_.PG6C */</span></div><div class="l">                }</div><div class="l">            }</div><div class="l">&#8203;</div><div class="l">            <span class="k">Device</span> (RP24)</div><div class="l">            {</div><div class="l">                <span class="k">Name</span> (_ADR, <span class="n">0x001B0007</span>)  <span class="c">// _ADR: Address</span></div><div class="l">                <span class="k">Method</span> (_PRT, <span class="n">0</span>, <span class="m">NotSerialized</span>)  <span class="c">// _PRT: PCI Routing Table</span></div><div class="l">                {</div><div class="l">                    <span class="k">If</span> (PICM)</div><div class="l">                    {</div><div class="l">                        <span class="k">Return</span> (AG6D) <span class="c">/* \_SB_.AG6D */</span></div><div class="l">                    }</div><div class="l">&#8203;</div><div class="l">                    <span class="k">Return</span> (PG6D) <span class="c">/* \_SB_.PG6D */</span></div><div class="l">                }</div><div class="l">            }</div><div class="l">&#8203;</div><div class="l">            <span class="k">Device</span> (LPC0)</div><div class="l">            {</div><div class="l">                <span class="k">Name</span> (_ADR, <span class="n">0x001F0000</span>   <span class="c">// _ADR: Address</span></div><div class="l">                <span class="k">OperationRegion</span> (LPCB, <span class="m">PCI_Config</span>, <span class="n">0x00</span>, <span class="n">0x0100</span>)</div><div class="l">                <span class="k">Field</span> (LPCB, <span class="m">DWordAcc</span>, <span class="m">NoLock</span>, <span class="m">Preserve</span>)</div><div class="l">                {</div><div class="l">                    <span class="k">Offset</span> (<span class="n">0xAC</span>),</div><div class="l">                    <span class="k">Offset</span> (<span class="n">0xAE</span>),</div><div class="l">                    XSMB,   <span class="n">1</span></div><div class="l">                }</div><div class="l">&#8203;</div><div class="l">                <span class="k">Device</span> (DMAC)</div><div class="l">                {</div><div class="l">                    <span class="k">Name</span> (_HID, <span class="k">EisaId</span> (<span class="s">&quot;PNP0200&quot;</span>) <span class="c">/* PC-class DMA Controller */</span>)  <span class="c">// _HID: Hardware ID</span></div><div class="l">                    <span class="k">Name</span> (_CRS, <span class="o">ResourceTemplate</span> ()  <span class="c">// _CRS: Current Resource Settings</span></div><div class="l">                    {</div><div class="l">                        <span class="o">IO</span> (<span class="m">Decode16</span>,</div><div class="l">                            <span class="n">0x0000</span>,             <span class="c">// Range Minimum</span></div><div class="l">                            <span class="n">0x0000</span>,             <span class="c">// Range Maximum</span></div><div class="l">                            <span class="n">0x00</span>,               <span class="c">// Alignment</span></div><div class="l">                            <span class="n">0x10</span>,               <span class="c">// Length</span></div><div class="l">                            )</div><div class="l">                        <span class="o">IO</span> (<span class="m">Decode16</span>,</div><div class="l">                            <span class="n">0x0081</span>,             <span class="c">// Range Minimum</span></div><div class="l">                            <span class="n">0x0081</span>,             <span class="c">// Range Maximum</span></div><div class="l">                            <span class="n">0x00</span>,               <span class="c">// Alignment</span></div><div class="l">                            <span class="n">0x03</span>,               <span class="c">// Length</span></div><div class="l">                            )</div><div class="l">                        <span class="o">IO</span> (<span class="m">Decode16</span>,</div></div>
    <div id="hlbox" class="a code" style="padding-left:9.2px;padding-top:5px">0x001F0000</div>
  </div>
  <div class="a" style="left:0;top:155px;width:2100px;height:2px;background:#0c0c0d"></div>
  <div class="a" style="left:0;top:157px;width:2100px;height:1.5px;background:#6a6b6d"></div>
  <div id="sbar" class="a"></div>
  <div class="a crumb" style="left:41px">DSDT</div>
  <div class="a crumb" style="left:128px">_SB</div>
  <div class="a crumb" style="left:195px;letter-spacing:1.8px">PC00</div>
  <div class="a crumb" style="left:282px;letter-spacing:1.3px">LPC0</div>
  <svg class="a" style="left:0;top:1709px" width="400" height="40"><g fill="#8c8d8f"><path d="M113 19 L120.4 22.4 L113 25.8 Z"/><path d="M180.2 19 L187.5 22.4 L180.2 25.8 Z"/><path d="M267.1 19 L274.4 22.4 L267.1 25.8 Z"/></g></svg>
</div>
<div id="frame" class="a"></div>
</body></html>
